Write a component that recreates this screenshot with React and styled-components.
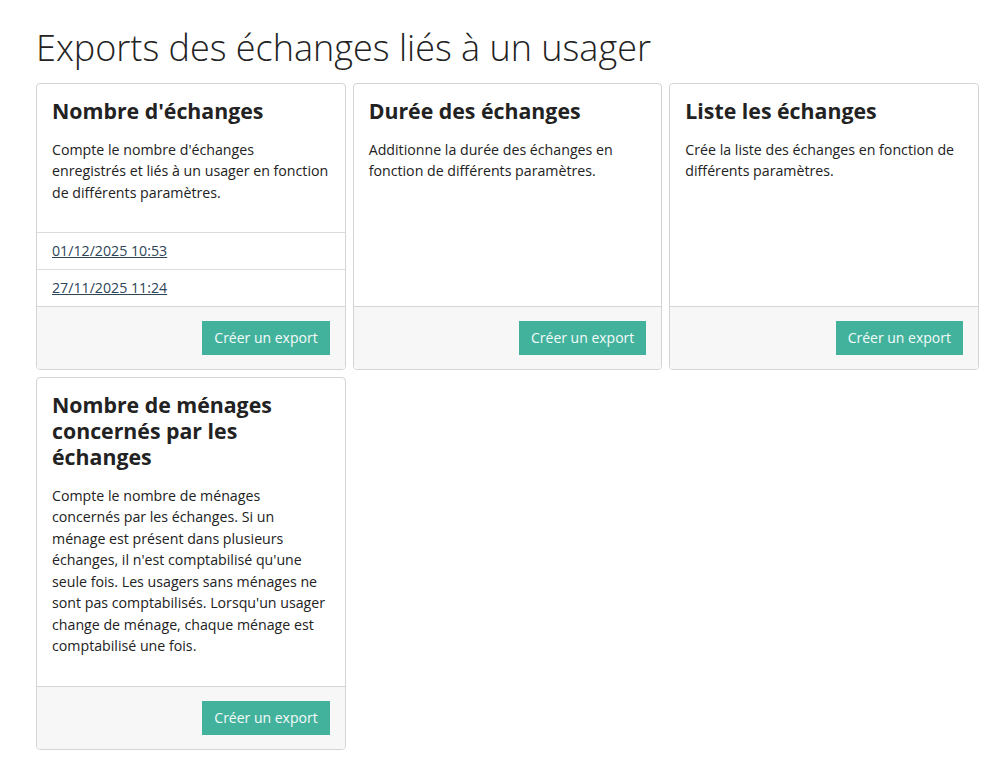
import React from "react";
import styled, { createGlobalStyle } from "styled-components";

const Global = createGlobalStyle`
  html, body { margin: 0; padding: 0; background: #fff; }
  body { font-family: "Open Sans", "Noto Sans", sans-serif; color: #222; }
  * { box-sizing: border-box; }
`;

const Page = styled.div`
  padding: 26px 29px 20px 36px;
`;

const Title = styled.h1`
  margin: 0 0 14px 0;
  font-size: 36px;
  font-weight: 300;
  line-height: 43px;
  color: #222;
`;

const Grid = styled.div`
  display: grid;
  grid-template-columns: repeat(3, 1fr);
  gap: 7px 7px;
  align-items: stretch;
`;

const Card = styled.div`
  display: flex;
  flex-direction: column;
  border: 1px solid #d4d4d4;
  border-radius: 4px;
  background: #fff;
  overflow: hidden;
`;

const Body = styled.div`
  flex: 1;
  padding: 13.5px 15px 15px 15px;
`;

const CardTitle = styled.h4`
  margin: 0 0 15px 0;
  font-size: 21.3px;
  font-weight: 700;
  line-height: 26px;
  color: #222;
`;

const Desc = styled.p`
  margin: 0 0 14px 0;
  font-size: 14.2px;
  line-height: 21.5px;
  color: #222;
`;

const List = styled.ul`
  list-style: none;
  margin: 0;
  padding: 0;
`;

const Item = styled.li`
  border-top: 1px solid #dcdcdc;
  padding: 7px 15px 8px;
  font-size: 14.2px;
  line-height: 21px;
`;

const DateLink = styled.a`
  color: #2e4557;
  text-decoration: underline;
`;

const Footer = styled.div`
  display: flex;
  justify-content: flex-end;
  border-top: 1px solid #d4d4d4;
  background: #f7f7f7;
  padding: 14px 15px 14px;
`;

const Button = styled.button`
  border: none;
  border-radius: 0;
  background: #43b29d;
  color: #f4fbf9;
  font-family: "Open Sans", "Noto Sans", sans-serif;
  font-size: 14px;
  line-height: 20px;
  padding: 7px 12px;
  cursor: pointer;
`;

const cards = [
  {
    title: "Nombre d'échanges",
    desc: "Compte le nombre d'échanges enregistrés et liés à un usager en fonction de différents paramètres.",
    items: ["01/12/2025 10:53", "27/11/2025 11:24"],
  },
  {
    title: "Durée des échanges",
    desc: "Additionne la durée des échanges en fonction de différents paramètres.",
  },
  {
    title: "Liste les échanges",
    desc: "Crée la liste des échanges en fonction de différents paramètres.",
  },
  {
    title: "Nombre de ménages concernés par les échanges",
    desc: "Compte le nombre de ménages concernés par les échanges. Si un ménage est présent dans plusieurs échanges, il n'est comptabilisé qu'une seule fois. Les usagers sans ménages ne sont pas comptabilisés. Lorsqu'un usager change de ménage, chaque ménage est comptabilisé une fois.",
  },
];

export default function App() {
  return (
    <>
      <Global />
      <Page>
        <Title>Exports des échanges liés à un usager</Title>
        <Grid>
          {cards.map((c) => (
            <Card key={c.title}>
              <Body>
                <CardTitle>{c.title}</CardTitle>
                <Desc>{c.desc}</Desc>
              </Body>
              {c.items && (
                <List>
                  {c.items.map((d) => (
                    <Item key={d}>
                      <DateLink href="#">{d}</DateLink>
                    </Item>
                  ))}
                </List>
              )}
              <Footer>
                <Button>Créer un export</Button>
              </Footer>
            </Card>
          ))}
        </Grid>
      </Page>
    </>
  );
}
